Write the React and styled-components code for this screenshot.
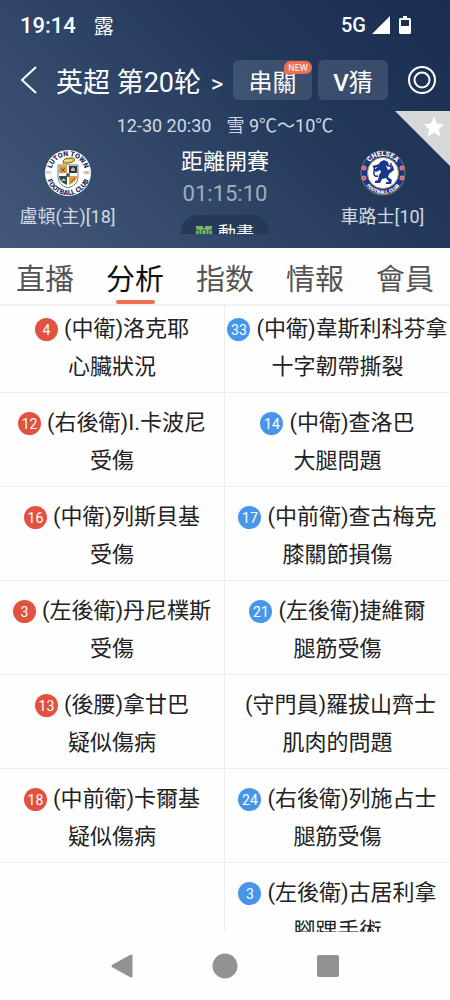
import styled, { createGlobalStyle } from 'styled-components';

const tabs = ['直播', '分析', '指数', '情報', '會員'];

const injuries = [
    { home: [4, '(中衛)洛克耶', '心臟狀況'], away: [33, '(中衛)韋斯利科芬拿', '十字韌帶撕裂'] },
    { home: [12, '(右後衛)I.卡波尼', '受傷'], away: [14, '(中衛)查洛巴', '大腿問題'] },
    { home: [16, '(中衛)列斯貝基', '受傷'], away: [17, '(中前衛)查古梅克', '膝關節損傷'] },
    { home: [3, '(左後衛)丹尼樸斯', '受傷'], away: [21, '(左後衛)捷維爾', '腿筋受傷'] },
    { home: [13, '(後腰)拿甘巴', '疑似傷病'], away: [null, '(守門員)羅拔山齊士', '肌肉的問題'] },
    { home: [18, '(中前衛)卡爾基', '疑似傷病'], away: [24, '(右後衛)列施占士', '腿筋受傷'] },
    { home: null, away: [3, '(左後衛)古居利拿', '腳踝手術'] },
];

function LutonCrest() {
    return (
        <Crest viewBox="0 0 46 46" role="img" aria-label="Luton Town">
            <defs>
                <path id="lutonTop" d="M6 23a17 17 0 0 1 34 0" />
                <path id="lutonBottom" d="M1 23a22 22 0 0 0 44 0" />
            </defs>
            <circle cx="23" cy="23" r="23" fill="#fff" />
            <g fill="#1f2f5c" fontFamily="Roboto, sans-serif" fontWeight="900" fontSize="7" textAnchor="middle">
                <text><textPath href="#lutonTop" startOffset="50%">LUTON TOWN</textPath></text>
                <text><textPath href="#lutonBottom" startOffset="50%">FOOTBALL CLUB</textPath></text>
            </g>
            <g fill="#667" fontFamily="Roboto, sans-serif" fontSize="3">
                <text x="1" y="24">EST</text>
                <text x="38" y="24">1885</text>
            </g>
            <path d="M13 15h20v12q0 8-10 11q-10-3-10-11z" fill="#fff" stroke="#77777c" strokeWidth="1" />
            <path d="M14 16h8v7h-8z" fill="#e59a35" />
            <path d="M24 16h8v7h-8z" fill="#203565" />
            <path d="M14 26h8v9q-8-3-8-9z" fill="#294d63" />
            <path d="M24 26h8q0 6-8 9z" fill="#e59a35" />
            <path d="M16 18l4 4m0-4l-4 4m10 10l4-4" stroke="#7a5531" />
            <path d="M26 21v-2l2-2 2 2v2zM16 31q3-5 5 0" fill="#e3b94e" />
            <circle cx="23" cy="25" r="2" fill="#555" />
            <path d="M18 13q0-5 6-5q5-1 6 2q-3 4-12 3z" fill="#e6bd45" stroke="#775b28" strokeWidth="1" />
            <path d="M19 11l8-1" stroke="#fff2a5" />
        </Crest>
    );
}

function ChelseaCrest() {
    return (
        <Crest viewBox="0 0 46 46" role="img" aria-label="Chelsea">
            <defs>
                <path id="chelseaTop" d="M6 23a17 17 0 0 1 34 0" />
                <path id="chelseaBottom" d="M2 23a21 21 0 0 0 42 0" />
            </defs>
            <circle cx="23" cy="23" r="22" fill="#17368c" stroke="#8e7b4b" />
            <circle cx="23" cy="23" r="15.5" fill="#fff" stroke="#b39a58" />
            <g fill="#fff" fontFamily="Roboto, sans-serif" fontWeight="900" textAnchor="middle">
                <text fontSize="7"><textPath href="#chelseaTop" startOffset="50%">CHELSEA</textPath></text>
                <text fontSize="5"><textPath href="#chelseaBottom" startOffset="50%">FOOTBALL CLUB</textPath></text>
            </g>
            <g fill="#e34c57" stroke="#e9a0a6" strokeWidth="1">
                <circle cx="4" cy="18" r="2" />
                <circle cx="4" cy="28" r="2" />
                <circle cx="42" cy="18" r="2" />
                <circle cx="42" cy="28" r="2" />
            </g>
            <path
                d="M20 12l4-2 4 2 1 3-3 1 2 4 4-2-1-3 2 1 1 4-5 4-1 3 4 3-1 4h-5v-2h3l-3-4-4 1-2 4h-5v-2l3-1 1-5 2-3-1-2-4 2-2-2 4-3-4 1-1-2 6-2z"
                fill="#17368c"
            />
            <path d="M18 26q-5 1-4-4t-1-6M27 16h4M31 13v8" fill="none" stroke="#17368c" strokeWidth="1.5" />
        </Crest>
    );
}

function Player({ info, side }) {
    if (!info) return <PlayerCell />;
    const [number, name, reason] = info;
    return (
        <PlayerCell>
            <PlayerLine>
                {number && <ShirtNumber $side={side}>{number}</ShirtNumber>}
                <PlayerName>{name}</PlayerName>
            </PlayerLine>
            <PlayerLine>{reason}</PlayerLine>
        </PlayerCell>
    );
}

function App() {
    return (
        <Page>
            <GlobalStyle />
            <Header>
                <StatusBar>
                    <Clock>19:14</Clock>
                    <Notice>露</Notice>
                    <Network>5G</Network>
                    <svg width="18" height="18" viewBox="0 0 18 18" aria-hidden="true">
                        <path d="M18 0v18H0z" fill="#fff" />
                    </svg>
                    <Battery width="12" height="18" viewBox="0 0 12 18" aria-hidden="true">
                        <path fillRule="evenodd" d="M4 0h4v2h3l1 1v14l-1 1H1l-1-1V3l1-1h3zM2 4v6h8V4z" fill="#fff" />
                    </Battery>
                </StatusBar>
                <TitleBar>
                    <IconButton aria-label="返回">
                        <svg width="18" height="28" viewBox="0 0 18 28">
                            <path d="M16 1L2 14l14 13" fill="none" stroke="#fff" strokeWidth="2" />
                        </svg>
                    </IconButton>
                    <League href="#league">英超 第20轮 <small>&gt;</small></League>
                    <HeadButton>串關<NewBadge>NEW</NewBadge></HeadButton>
                    <HeadButton $narrow><b>V</b>猜</HeadButton>
                    <TargetButton aria-label="設定">
                        <svg width="30" height="30" viewBox="0 0 30 30" fill="none" stroke="#fff" strokeWidth="2">
                            <circle cx="15" cy="15" r="13" />
                            <circle cx="15" cy="15" r="7.5" />
                        </svg>
                    </TargetButton>
                </TitleBar>
                <MatchTime><span>12-30 20:30</span><span>雪 9℃～10℃</span></MatchTime>
                <Match>
                    <Team>
                        <LutonCrest />
                        <span>盧頓(主)[18]</span>
                    </Team>
                    <Countdown>
                        <div>距離開賽</div>
                        <Timer>01:15:10</Timer>
                        <AnimationButton>
                            <svg width="16" height="14" viewBox="0 0 16 14" aria-hidden="true">
                                <path d="M0 1h7v2h2V1h7v13H0z" fill="#75b966" />
                                <path d="M0 5h3v5H0m16-5h-3v5h3M8 10v4" fill="none" stroke="#344b43" />
                                <circle cx="8" cy="7" r="2.5" fill="none" stroke="#344b43" />
                            </svg>
                            動畫
                        </AnimationButton>
                    </Countdown>
                    <Team>
                        <ChelseaCrest />
                        <span>車路士[10]</span>
                    </Team>
                </Match>
                <Favourite aria-label="收藏">
                    <svg width="55" height="55" viewBox="0 0 55 55">
                        <path d="M0 0h55v55z" fill="#d8d8d8" />
                        <path d="M39 6l3 6.500 7 .8-5.200 4.900 1.400 7.100-6.200-3.500-6.200 3.500 1.400-7.100-5.200-4.900 7-.8z" fill="#fff" />
                    </svg>
                </Favourite>
            </Header>
            <Tabs>
                {tabs.map((tab) => (
                    <Tab key={tab} href="#tab" $active={tab === '分析'}>{tab}</Tab>
                ))}
            </Tabs>
            <Content>
                <InjuryTable>
                    <tbody>
                        {injuries.map((row) => (
                            <tr key={row.away[1]}>
                                <Player info={row.home} side="home" />
                                <Player info={row.away} side="away" />
                            </tr>
                        ))}
                    </tbody>
                </InjuryTable>
            </Content>
            <SystemBar>
                <IconButton aria-label="上一頁">
                    <svg width="24" height="26" viewBox="0 0 24 26">
                        <path d="M3 13L21 3v20z" fill="#929292" stroke="#929292" strokeWidth="3" strokeLinejoin="round" />
                    </svg>
                </IconButton>
                <IconButton aria-label="主畫面">
                    <svg width="26" height="26" viewBox="0 0 26 26"><circle cx="13" cy="13" r="12.500" fill="#929292" /></svg>
                </IconButton>
                <IconButton aria-label="最近使用">
                    <svg width="24" height="26" viewBox="0 0 24 26"><rect x="1" y="2" width="22" height="22" rx="2" fill="#929292" /></svg>
                </IconButton>
            </SystemBar>
        </Page>
    );
}

export default App;

const GlobalStyle = createGlobalStyle`
* {
    box-sizing: border-box;
}

body {
    margin: 0;
    background: #fefefe;
    font-family: Roboto, "Noto Sans CJK SC", sans-serif;
    color: #222;
}

button {
    padding: 0;
    border: 0;
    background: none;
    color: inherit;
    font-family: inherit;
}

a {
    color: inherit;
    text-decoration: none;
}

svg {
    display: block;
    flex-shrink: 0;
}
`;

const Page = styled.main`
    display: flex;
    flex-direction: column;
    height: 100vh;
`;

const Header = styled.header`
    position: relative;
    flex-shrink: 0;
    padding-bottom: 14px;
    background: linear-gradient(225deg, #192d52 0%, #22385a 35%, #42597b 100%);
    color: #fff;
`;

const StatusBar = styled.div`
    display: flex;
    align-items: center;
    height: 50px;
    padding: 0 39px 0 20px;
`;

const Clock = styled.span`
    font-size: 22px;
    font-weight: 500;
`;

const Notice = styled.span`
    margin-left: 18px;
    font-size: 20px;
`;

const Network = styled.span`
    margin: 0 6px 0 auto;
    font-size: 20px;
    font-weight: 500;
`;

const Battery = styled.svg`
    margin-left: 9px;
`;

const TitleBar = styled.div`
    display: flex;
    align-items: center;
    height: 60px;
    padding: 0 13px 0 20px;
`;

const IconButton = styled.button`
    display: flex;
    align-items: center;
    justify-content: center;
`;

const League = styled.a`
    margin: 0 auto 0 18px;
    font-size: 27px;
    white-space: nowrap;

    small {
        margin-left: 3px;
        font-size: 24px;
    }
`;

const HeadButton = styled.button`
    position: relative;
    width: ${({ $narrow }) => ($narrow ? 70 : 79)}px;
    height: 40px;
    margin-right: 6px;
    border-radius: 6px;
    background: rgba(255, 255, 255, 0.12);
    font-size: 24px;

    b {
        font-weight: 500;
    }
`;

const NewBadge = styled.span`
    position: absolute;
    top: 1px;
    right: 0;
    width: 28px;
    height: 13px;
    border-radius: 7px 7px 7px 2px;
    background: #ed7055;
    font-family: Roboto, sans-serif;
    font-size: 9px;
    line-height: 14px;
`;

const TargetButton = styled(IconButton)`
    margin-left: 13px;
`;

const MatchTime = styled.div`
    display: flex;
    justify-content: center;
    gap: 15px;
    height: 32px;
    font-size: 18px;
    line-height: 32px;
    color: #d3d9e1;
`;

const Match = styled.div`
    display: grid;
    grid-template-columns: 3fr 4fr 3fr;
    grid-template-rows: 92px;
`;

const Team = styled.div`
    display: flex;
    flex-direction: column;
    align-items: center;
    padding-top: 8px;
    font-size: 18px;
    line-height: 42px;
    color: #d3d9e1;
    white-space: nowrap;
`;

const Crest = styled.svg`
    width: 46px;
    height: 46px;
`;

const Countdown = styled.div`
    display: flex;
    flex-direction: column;
    align-items: center;
    padding-top: 4px;
    overflow: hidden;
    font-size: 22px;
    line-height: 32px;
`;

const Timer = styled.div`
    color: #a3adbc;
`;

const AnimationButton = styled.button`
    display: flex;
    flex-shrink: 0;
    align-items: center;
    justify-content: center;
    gap: 6px;
    width: 88px;
    height: 34px;
    margin-top: 5px;
    border-radius: 17px;
    background: #263a57;
    font-size: 18px;
`;

const Favourite = styled.button`
    position: absolute;
    top: 111px;
    right: 0;
`;

const Tabs = styled.nav`
    display: flex;
    flex-shrink: 0;
    height: 58px;
    border-bottom: 2px solid #f1f1f1;
`;

const Tab = styled.a`
    display: flex;
    flex: 1;
    flex-direction: column;
    align-items: center;
    justify-content: space-between;
    font-size: 29px;
    line-height: 64px;
    height: 56px;
    color: ${({ $active }) => ($active ? '#111' : '#555')};

    &::after {
        content: '';
        flex-shrink: 0;
        width: 39px;
        height: 4px;
        margin-top: -12px;
        border-radius: 2px;
        background: ${({ $active }) => ($active ? '#ed7055' : 'transparent')};
    }
`;

const Content = styled.section`
    flex: 1;
    min-height: 0;
    overflow: hidden;
`;

/* list is scrolled a little under the tabs */
const InjuryTable = styled.table`
    width: 100%;
    margin-top: -7px;
    border-collapse: separate;
    border-spacing: 0;
    table-layout: fixed;
`;

const PlayerCell = styled.td`
    height: 94px;
    padding: 11px 0 6px;
    border-bottom: 1px solid #eee;
    font-size: 22px;
    line-height: 38px;
    white-space: nowrap;

    &:first-child {
        border-right: 1px solid #eee;
    }
`;

const PlayerLine = styled.div`
    display: flex;
    align-items: center;
    justify-content: center;
    height: 38px;
`;

const PlayerName = styled.span`
    margin-left: 6px;
`;

const ShirtNumber = styled.span`
    width: 23px;
    height: 23px;
    border-radius: 50%;
    background: ${({ $side }) => ($side === 'home' ? '#e25241' : '#4796ec')};
    color: #fff;
    font-size: 14px;
    line-height: 24px;
    text-align: center;
`;

const SystemBar = styled.footer`
    display: flex;
    flex-shrink: 0;
    align-items: center;
    justify-content: center;
    gap: 78px;
    height: 68px;
`;
